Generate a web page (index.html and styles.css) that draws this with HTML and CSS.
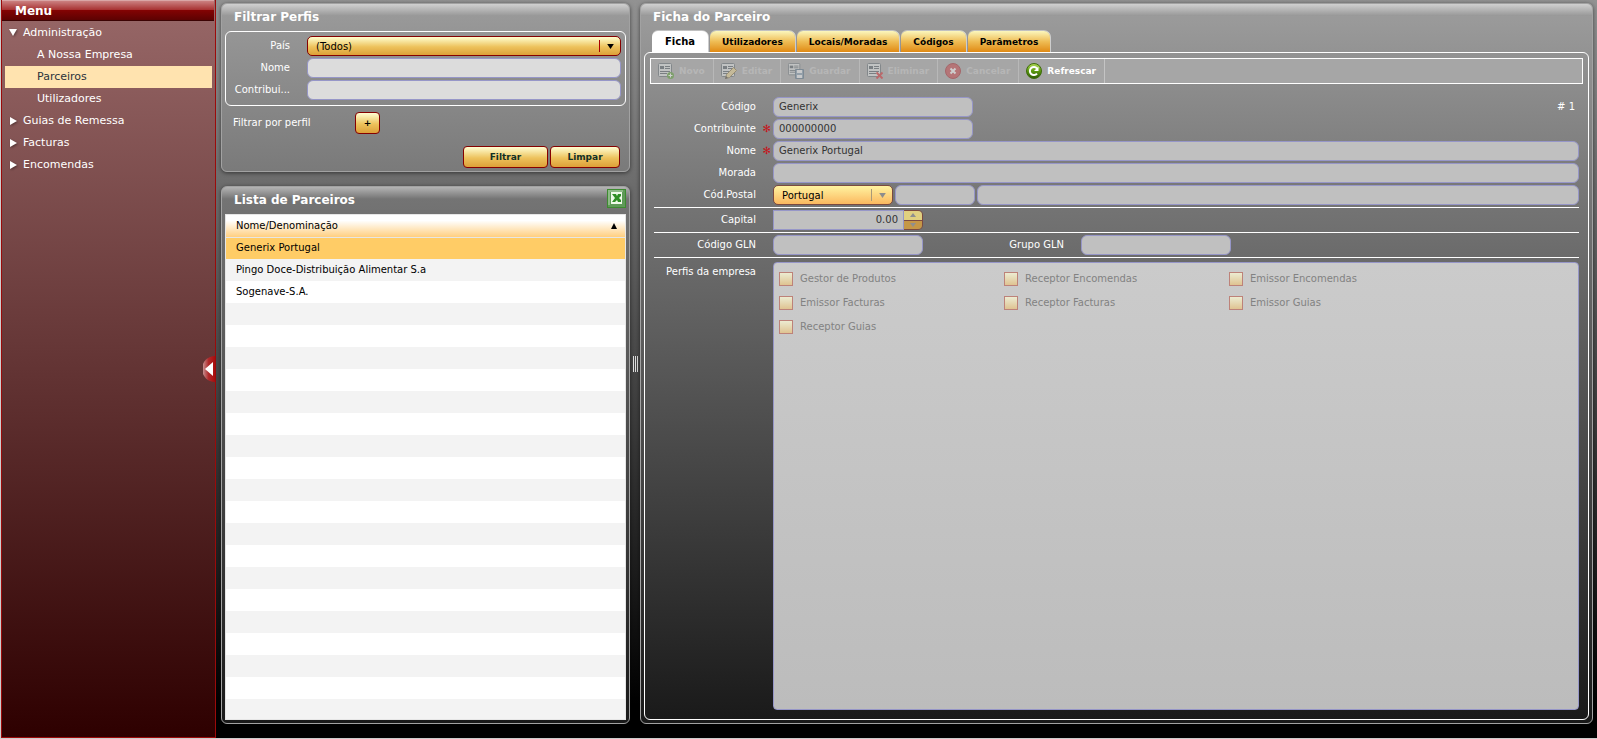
FILE: index.html
```html
<!DOCTYPE html>
<html lang="pt">
<head>
<meta charset="utf-8">
<title>Ficha do Parceiro</title>
<link rel="stylesheet" href="styles.css">
</head>
<body>
<svg class="defs" aria-hidden="true">
  <symbol id="doc" viewBox="0 0 16 16">
    <rect x=".5" y=".5" width="13" height="13" rx="1" fill="#e3e6e6" stroke="#59656b"/>
    <path d="M2 3h4v3H2z" fill="#46525a"/>
    <path d="M7 3.500h5M7 5.500h5M2 8.500h10M2 10.500h7" stroke="#46525a"/>
  </symbol>
</svg>
<div class="app">
  <nav class="menu" aria-label="Menu">
    <h2 class="menu-title">Menu</h2>
    <ul class="tree">
      <li><a class="node" href="#"><svg class="twist" viewBox="0 0 8 8"><path d="M0 0h8L4 7z"/></svg>Administração</a>
        <ul class="branch">
          <li><a class="leaf" href="#">A Nossa Empresa</a></li>
          <li><a class="leaf current" href="#" aria-current="page">Parceiros</a></li>
          <li><a class="leaf" href="#">Utilizadores</a></li>
        </ul>
      </li>
      <li><a class="node" href="#"><svg class="twist" viewBox="0 0 8 8"><path d="M1 0v8l7-4z"/></svg>Guias de Remessa</a></li>
      <li><a class="node" href="#"><svg class="twist" viewBox="0 0 8 8"><path d="M1 0v8l7-4z"/></svg>Facturas</a></li>
      <li><a class="node" href="#"><svg class="twist" viewBox="0 0 8 8"><path d="M1 0v8l7-4z"/></svg>Encomendas</a></li>
    </ul>
    <button class="collapse" type="button" aria-label="Recolher menu">
      <svg viewBox="0 0 12 26" width="12" height="26"><defs><linearGradient id="red"><stop stop-color="#c9a0a0"/><stop offset=".5" stop-color="#b02a2c"/><stop offset="1" stop-color="#a80c0c"/></linearGradient></defs><path d="M12 0A13 13 0 0 0 12 26z" fill="url(#red)"/><path d="M10 6v14L2 13z" fill="#fff"/></svg>
    </button>
  </nav>

  <main class="work">
    <div class="side">
      <section class="panel">
        <h2 class="panel-title">Filtrar Perfis</h2>
        <div class="filters">
          <label class="label" for="pais">País</label>
          <span class="drop"><select id="pais" class="select"><option>(Todos)</option></select><svg class="arrow" viewBox="0 0 8 6"><path d="M0 0h8L4 6z"/></svg></span>
          <label class="label" for="fnome">Nome</label>
          <input id="fnome" class="field bright" type="text">
          <label class="label" for="fcontrib">Contribui...</label>
          <input id="fcontrib" class="field bright" type="text">
        </div>
        <div class="profile-row"><span>Filtrar por perfil</span><button class="btn plus" type="button">+</button></div>
        <div class="actions"><button class="btn filter" type="button">Filtrar</button><button class="btn clear" type="button">Limpar</button></div>
      </section>

      <section class="panel list-panel">
        <header class="list-head">
          <h2 class="panel-title">Lista de Parceiros</h2>
          <button class="excel" type="button" aria-label="Exportar para Excel">
            <svg viewBox="0 0 19 19" width="19" height="19"><rect x=".5" y=".5" width="18" height="18" fill="#5f9a58" stroke="#3d8a30"/><path d="M2 16V2h14" fill="none" stroke="#8dba86" stroke-width="2"/><rect x="4" y="3" width="11" height="12" fill="#eefae8"/><path d="M5 5h4l1 2 1-2h3v2l-2 2 2 2v2h-3l-1-2-2 2H5l3-4z" fill="#2f8f25"/></svg>
          </button>
        </header>
        <div class="grid">
          <table class="table">
            <thead><tr><th scope="col"><span class="th">Nome/Denominação<svg class="sort" viewBox="0 0 6 6"><path d="M3 0l3 6H0z"/></svg></span></th></tr></thead>
            <tbody>
              <tr class="selected"><td>Generix Portugal</td></tr>
              <tr><td>Pingo Doce-Distribuição Alimentar S.a</td></tr>
              <tr><td>Sogenave-S.A.</td></tr>
            </tbody>
          </table>
        </div>
      </section>
    </div>

    <div class="splitter"><span class="grip"></span></div>

    <section class="panel detail">
      <h2 class="panel-title">Ficha do Parceiro</h2>
      <div class="tabs" role="tablist">
        <button class="tab active" type="button" role="tab" aria-selected="true">Ficha</button>
        <button class="tab" type="button" role="tab">Utilizadores</button>
        <button class="tab" type="button" role="tab">Locais/Moradas</button>
        <button class="tab" type="button" role="tab">Códigos</button>
        <button class="tab" type="button" role="tab">Parâmetros</button>
      </div>
      <div class="sheet">
        <div class="toolbar">
          <button class="tool" type="button" disabled><svg viewBox="0 0 16 16"><use href="#doc" width="16" height="16"/><circle cx="12.500" cy="12.500" r="3.500" fill="#4f9a28"/><path d="M12.500 10.500v4M10.500 12.500h4" stroke="#fff"/></svg>Novo</button>
          <button class="tool" type="button" disabled><svg viewBox="0 0 16 16"><use href="#doc" width="16" height="16"/><path d="M4.500 15.500l1-4 7-7 3 3-7 7z" fill="#ecd38a" stroke="#85703a"/><path d="M4 16l1-3 2 2z" fill="#333"/></svg>Editar</button>
          <button class="tool" type="button" disabled><svg viewBox="0 0 16 16"><use href="#doc" width="14" height="14"/><path d="M7.500 6.500h8v9h-8z" fill="#7d98ad" stroke="#4e6a80"/><path d="M9 7h5v3H9zM9 12h5v3H9z" fill="#f2f5f7"/></svg>Guardar</button>
          <button class="tool" type="button" disabled><svg viewBox="0 0 16 16"><use href="#doc" width="16" height="16"/><path d="M9.500 9.500l6 6M15.500 9.500l-6 6" stroke="#d32025" stroke-width="2"/></svg>Eliminar</button>
          <button class="tool" type="button" disabled><svg viewBox="0 0 16 16"><circle cx="8" cy="8" r="7.500" fill="#c83a40" stroke="#a21a20"/><path d="M5.500 5.500l5 5M10.500 5.500l-5 5" stroke="#fff" stroke-width="2"/></svg>Cancelar</button>
          <button class="tool" type="button"><svg viewBox="0 0 16 16"><defs><linearGradient id="green" x2="0" y2="1"><stop stop-color="#b5dc5a"/><stop offset=".5" stop-color="#5c9a10"/><stop offset="1" stop-color="#2d5904"/></linearGradient></defs><circle cx="8" cy="8" r="7.500" fill="url(#green)" stroke="#3e6c0c"/><path d="M11 10.500A4 4 0 1 1 11 5.500" fill="none" stroke="#fff" stroke-width="2"/><path d="M12.500 3.500V8H8z" fill="#fff"/></svg>Refrescar</button>
        </div>

        <form class="form">
          <div class="row">
            <label class="label" for="codigo">Código</label><span></span>
            <div class="cells"><input id="codigo" class="field mid" value="Generix" disabled><span class="record"># 1</span></div>
          </div>
          <div class="row">
            <label class="label" for="contrib">Contribuinte</label><span class="star">✻</span>
            <div class="cells"><input id="contrib" class="field mid" value="000000000" disabled></div>
          </div>
          <div class="row">
            <label class="label" for="nome">Nome</label><span class="star">✻</span>
            <div class="cells"><input id="nome" class="field wide" value="Generix Portugal" disabled></div>
          </div>
          <div class="row">
            <label class="label" for="morada">Morada</label><span></span>
            <div class="cells"><input id="morada" class="field wide" disabled></div>
          </div>
          <div class="row">
            <label class="label" for="pais2">Cód.Postal</label><span></span>
            <div class="cells">
              <span class="drop country"><select id="pais2" class="select" disabled><option>Portugal</option></select><svg class="arrow" viewBox="0 0 8 6"><path d="M0 0h8L4 6z"/></svg></span>
              <input class="field zip" aria-label="Código postal" disabled>
              <input class="field wide" aria-label="Localidade" disabled>
            </div>
          </div>
          <div class="row ruled">
            <label class="label" for="capital">Capital</label><span></span>
            <div class="cells stepper">
              <input id="capital" class="field amount" value="0.00" disabled>
              <span class="steps">
                <button type="button" class="step" aria-label="Aumentar" disabled><svg viewBox="0 0 6 4"><path d="M3 0l3 4H0z"/></svg></button>
                <button type="button" class="step" aria-label="Diminuir" disabled><svg viewBox="0 0 6 4"><path d="M0 0h6L3 4z"/></svg></button>
              </span>
            </div>
          </div>
          <div class="row ruled">
            <label class="label" for="gln">Código GLN</label><span></span>
            <div class="cells"><input id="gln" class="field gln" disabled><label class="label group" for="grupo">Grupo GLN</label><input id="grupo" class="field gln" disabled></div>
          </div>
          <div class="row ruled profiles-row">
            <span class="label">Perfis da empresa</span><span></span>
            <div class="profiles">
              <label class="check"><input type="checkbox" disabled>Gestor de Produtos</label>
              <label class="check"><input type="checkbox" disabled>Receptor Encomendas</label>
              <label class="check"><input type="checkbox" disabled>Emissor Encomendas</label>
              <label class="check"><input type="checkbox" disabled>Emissor Facturas</label>
              <label class="check"><input type="checkbox" disabled>Receptor Facturas</label>
              <label class="check"><input type="checkbox" disabled>Emissor Guias</label>
              <label class="check"><input type="checkbox" disabled>Receptor Guias</label>
            </div>
          </div>
        </form>
      </div>
    </section>
  </main>
</div>
</body>
</html>
```
FILE: styles.css
```css
* { box-sizing: border-box; }

body {
  margin: 0;
  font: 10px/20px "DejaVu Sans", Verdana, sans-serif;
  color: #fff;
}

button, input, select { font: inherit; margin: 0; }
ul { list-style: none; margin: 0; padding: 0; }
svg { display: block; flex: none; }
.defs { position: absolute; width: 0; height: 0; }

.app {
  display: flex;
  height: 100vh;
  border-left: 1px solid #ccc;
  border-bottom: 1px solid #ccc;
  background: linear-gradient(#929292, #000 96%);
}

/* Menu */
.menu {
  position: relative;
  flex: none;
  width: 215px;
  border: 1px solid #9c0a0a;
  border-top: 0;
  background: linear-gradient(#986868, #2e0000);
}
.menu-title {
  margin: 0 1px 0 0;
  padding-left: 13px;
  height: 21px;
  font-size: 12px;
  line-height: 20px;
  background: linear-gradient(#cb8080, #a93434 45%, #850303 46%, #5c0202);
  border-top: 1px solid #d9a5a5;
  border-bottom: 1px solid #3c0303;
}
.tree { padding: 1px 3px; font-size: 11px; line-height: 22px; }
.node, .leaf { display: flex; align-items: center; height: 22px; color: #fff; text-decoration: none; }
.node { padding-left: 4px; gap: 6px; }
.leaf { padding-left: 32px; }
.leaf.current { background: #ffe3af; color: #2b333c; }
.twist { width: 8px; height: 8px; fill: #fff; filter: drop-shadow(1px 1px 1px #0006); }
.collapse {
  position: absolute;
  right: 0;
  top: 50%;
  margin-top: -13px;
  padding: 0;
  border: 0;
  background: none;
}

/* Panels */
.work { flex: 1; min-width: 0; display: flex; padding: 3px 4px 14px 5px; }
.side { flex: none; width: 409px; display: flex; flex-direction: column; gap: 14px; }
.panel {
  border: 1px solid #a2a2a2;
  border-radius: 6px;
  background: linear-gradient(#d0d0d0, #979797) top / 100% 12px no-repeat, linear-gradient(#9b9b9b, #7a7a7a);
  box-shadow: 0 1px 4px #0008;
  padding: 0 3px 3px;
}
.panel-title { margin: 0; padding-left: 9px; height: 27px; font-size: 12px; line-height: 26px; }
.label { text-align: right; white-space: nowrap; }

.filters {
  display: grid;
  grid-template-columns: 60px 1fr;
  gap: 2px 17px;
  padding: 4px 4px 5px;
  border: 1px solid #fff;
  border-radius: 6px;
}
.field {
  height: 20px;
  min-width: 0;
  padding: 0 5px;
  border: 1px solid #9696c8;
  border-radius: 6px;
  background: #c0c0c0;
  color: #333;
}
.field.bright { width: 100%; background: #dcdcdc; }
.wide { flex: 1; }
.drop { position: relative; display: block; }
.select {
  appearance: none;
  display: block;
  width: 100%;
  height: 20px;
  padding: 0 24px 0 8px;
  border: 1px solid #850000;
  border-radius: 5px;
  color: #000;
  opacity: 1;
  background:
    linear-gradient(#a00, #a00) right 20px center / 1px 12px no-repeat,
    linear-gradient(#ffffcf, #edc25c 55%, #dda038);
}
.select:disabled {
  border-color: #7c4a40;
  background:
    linear-gradient(#a99a78, #a99a78) right 20px center / 1px 12px no-repeat,
    linear-gradient(#fff3a0, #fbb85f);
}
.arrow { position: absolute; right: 7px; top: 8px; width: 7px; height: 5px; fill: #000; pointer-events: none; }
.country .arrow { fill: #8d8d8d; }

.btn {
  height: 22px;
  padding: 0;
  border: 1px solid #850000;
  border-radius: 4px;
  background: linear-gradient(#fffed2, #edc25c 55%, #dda038);
  color: #123026;
  font-size: 9px;
  font-weight: bold;
}
.plus { width: 25px; color: #000; }
.filter { width: 85px; }
.clear { width: 70px; }
.profile-row { display: flex; align-items: center; padding: 6px 8px 0; }
.profile-row span { width: 122px; }
.actions { display: flex; justify-content: flex-end; gap: 2px; padding: 12px 6px 0; }

/* Partner list */
.list-panel {
  flex: 1;
  min-height: 0;
  display: flex;
  flex-direction: column;
  background: linear-gradient(#b4b4b4, #747474) top / 100% 12px no-repeat, linear-gradient(#767676, #191919);
}
.list-head { display: flex; justify-content: space-between; align-items: center; height: 27px; }
.excel { padding: 0 0 4px; border: 0; background: none; }
.grid {
  flex: 1;
  border: 1px solid #e6e6e6;
  background: repeating-linear-gradient(#f3f3f3 0 22px, #fff 22px 44px);
}
.table { width: 100%; border-collapse: collapse; color: #000; line-height: 20px; }
.table th, .table td { height: 22px; padding: 0 10px; text-align: left; font-weight: normal; }
.table th { background: linear-gradient(#fff 25%, #ffcf80); border-bottom: 1px solid #e6e6e6; }
.th { display: flex; justify-content: space-between; align-items: center; }
.sort { width: 6px; height: 6px; margin-right: -2px; }
.selected { background: #ffcc66; }

.splitter { flex: none; width: 10px; display: flex; align-items: center; justify-content: center; }
.grip { width: 5px; height: 16px; background: repeating-linear-gradient(90deg, #ddd 0 1px, #444 1px 2px); }

/* Detail */
.detail {
  flex: 1;
  min-width: 0;
  display: flex;
  flex-direction: column;
  background: linear-gradient(#d0d0d0, #979797) top / 100% 12px no-repeat, linear-gradient(#9d9d9d, #747474 28%, #191919);
}
.tabs { display: flex; gap: 2px; padding-left: 8px; }
.tab {
  height: 21px;
  padding: 0 12px;
  border: 0;
  border-radius: 6px 6px 0 0;
  background: linear-gradient(#fbf7bd, #efbd55 50%, #e08a14);
  box-shadow: 1px 0 #fff8, 0 -1px #fff6;
  color: #000;
  font-size: 9px;
  font-weight: bold;
}
.tab.active { padding: 0 13px; background: #fff; font-size: 10px; }
.sheet {
  flex: 1;
  min-height: 0;
  display: flex;
  flex-direction: column;
  padding: 5px;
  border: 1px solid #fff;
  border-radius: 6px;
}
.toolbar { display: flex; height: 26px; border: 1px solid #fff; background: #a6a6a6; }
.tool {
  display: flex;
  align-items: center;
  gap: 5px;
  padding: 0 8px 0 7px;
  border: 0;
  border-right: 1px solid #c4c4c4;
  background: none;
  color: #fff;
  font-size: 9px;
  font-weight: bold;
}
.tool:disabled { color: #b6b6b6; border-color: #b8b8b8; }
.tool svg { width: 16px; height: 16px; }
.tool:disabled svg { opacity: .45; }

.form { flex: 1; min-height: 0; display: flex; flex-direction: column; gap: 2px; padding: 13px 4px 4px; }
.row { display: grid; grid-template-columns: 102px 17px 1fr; }
.cells { display: flex; gap: 2px; min-width: 0; }
.mid { width: 200px; }
.record { margin-left: auto; padding-right: 4px; }
.star { padding-right: 2px; color: #c4161c; text-align: right; }
.country { width: 120px; }
.zip { width: 80px; }
.ruled { border-top: 1px solid #fff; padding-top: 2px; }
.stepper { gap: 0; }
.amount { width: 131px; border-radius: 0; text-align: right; }
.steps { display: flex; flex-direction: column; width: 19px; height: 20px; border: 1px solid #7c4a40; border-left: 0; border-radius: 0 5px 5px 0; overflow: hidden; }
.step { flex: 1; display: grid; place-items: center; padding: 0; border: 0; background: #e1d080; }
.step + .step { border-top: 1px solid #7c4a40; background: #c59747; }
.step svg { width: 6px; height: 4px; fill: #8f8f8f; }
.gln { width: 150px; }
.group { width: 139px; margin-right: 15px; }

.profiles-row { flex: 1; padding-top: 4px; }
.profiles {
  display: grid;
  grid-template-columns: 225px 225px 225px;
  grid-auto-rows: 24px;
  align-content: start;
  padding: 4px 5px;
  border: 1px solid #9696c8;
  border-radius: 4px;
  background: linear-gradient(#cbcbcb, #bcbcbc);
  color: #828282;
}
.check { display: flex; align-items: center; gap: 7px; }
.check input {
  appearance: none;
  width: 14px;
  height: 14px;
  border: 1px solid #bd8279;
  background: linear-gradient(#ececd2, #dfc391);
}
```
